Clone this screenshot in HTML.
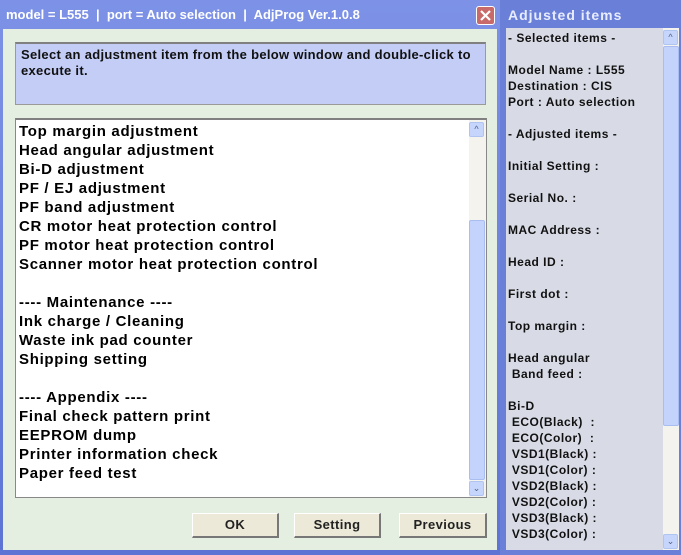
<!DOCTYPE html>
<html><head><meta charset="utf-8"><style>
*{margin:0;padding:0;box-sizing:border-box}
body{width:681px;height:555px;overflow:hidden;background:#6a7fd8;font-family:"Liberation Sans",Arial,sans-serif;position:relative}
.abs{position:absolute}
#lwin{left:0;top:0;width:500px;height:555px;background:linear-gradient(#7d92e6,#5d74d4);}
#ltitle{left:6px;top:7px;color:#fff;font-size:13px;font-weight:bold;white-space:nowrap;letter-spacing:0px}
#close{left:476px;top:6px;width:19px;height:19px;background:#c86a6a;border:1px solid #fff;border-radius:3px}
#lbody{left:3px;top:29px;width:494px;height:521px;background:#e4efe2}
#info{left:15px;top:42px;width:471px;height:63px;background:#c3cdf6;border:1px solid #9a9a9a;border-top:2px solid #808080;font-size:13px;font-weight:bold;padding:3px 5px;line-height:16px;color:#111;letter-spacing:0.3px}
#list{left:15px;top:118px;width:472px;height:380px;background:#fff;border:1px solid #888;border-top:2px solid #808080}
#list .t{position:absolute;left:3px;top:2px;font-size:15px;font-weight:bold;letter-spacing:0.7px;line-height:19px;color:#000;white-space:nowrap}
.sb{position:absolute;background:#f4f3ee}
.thumb{position:absolute;background:#c3d3fb;border:1px solid #a9bdf0;border-radius:2px}
.arr{position:absolute;width:15px;height:15px;background:#c5d5fb;border:1px solid #b0c4f2;border-radius:2px;font-size:9px;color:#4d6185;text-align:center;line-height:13px}
.btn{position:absolute;top:513px;height:25px;background:#ece9d8;border:1px solid #fff;border-right:2px solid #777;border-bottom:2px solid #777;font-size:13px;font-weight:bold;text-align:center;line-height:22px;color:#222;letter-spacing:0.4px}
#rtitle{left:508px;top:7px;color:#e8ecff;font-size:14px;font-weight:bold;white-space:nowrap;letter-spacing:1px}
#rbody{left:506px;top:28px;width:157px;height:522px;background:#d8dbe6}
#rbody .t{position:absolute;left:2px;top:2px;font-size:12px;font-weight:bold;line-height:16px;color:#111;white-space:pre;letter-spacing:0.5px}
</style></head><body>
<div id="lwin" class="abs"></div>
<div id="ltitle" class="abs">model = L555 &nbsp;|&nbsp; port = Auto selection &nbsp;|&nbsp; AdjProg Ver.1.0.8</div>
<div id="close" class="abs"><svg width="17" height="17" viewBox="0 0 17 17"><path d="M4 4L13 13M13 4L4 13" stroke="#fff" stroke-width="2.2"/></svg></div>
<div id="lbody" class="abs"></div>
<div id="info" class="abs">Select an adjustment item from the below window and double-click to execute it.</div>
<div id="list" class="abs">
<div class="t">Top margin adjustment<br>Head angular adjustment<br>Bi-D adjustment<br>PF / EJ adjustment<br>PF band adjustment<br>CR motor heat protection control<br>PF motor heat protection control<br>Scanner motor heat protection control<br><br>---- Maintenance ----<br>Ink charge / Cleaning<br>Waste ink pad counter<br>Shipping setting<br><br>---- Appendix ----<br>Final check pattern print<br>EEPROM dump<br>Printer information check<br>Paper feed test</div>
<div class="sb" style="left:453px;top:0;width:17px;height:377px"></div>
<div class="arr" style="left:453px;top:2px">&#94;</div>
<div class="thumb" style="left:453px;top:100px;width:16px;height:260px"></div>
<div class="arr" style="left:453px;top:361px">&#8964;</div>
</div>
<div class="btn" style="left:192px;width:87px">OK</div>
<div class="btn" style="left:294px;width:87px">Setting</div>
<div class="btn" style="left:399px;width:88px">Previous</div>
<div id="rtitle" class="abs">Adjusted items</div>
<div id="rbody" class="abs"><div class="t">- Selected items -

Model Name : L555
Destination : CIS
Port : Auto selection

- Adjusted items -

Initial Setting :

Serial No. :

MAC Address :

Head ID :

First dot :

Top margin :

Head angular
 Band feed :

Bi-D
 ECO(Black)  :
 ECO(Color)  :
 VSD1(Black) :
 VSD1(Color) :
 VSD2(Black) :
 VSD2(Color) :
 VSD3(Black) :
 VSD3(Color) :</div></div>
<div class="sb abs" style="left:663px;top:28px;width:16px;height:522px"></div>
<div class="arr" style="left:663px;top:30px">&#94;</div>
<div class="thumb" style="left:663px;top:46px;width:16px;height:380px"></div>
<div class="arr" style="left:663px;top:534px">&#8964;</div>
</body></html>
